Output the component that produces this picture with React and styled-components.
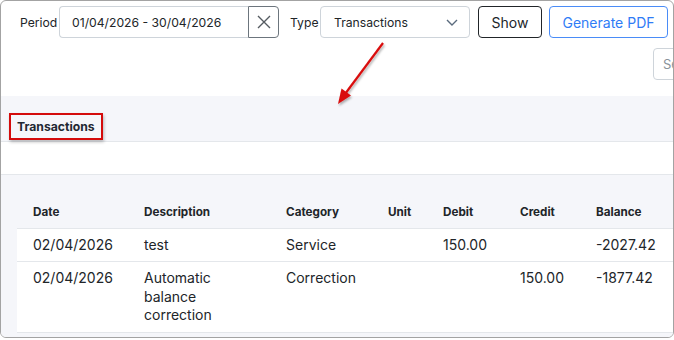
import React from 'react';
import styled, { createGlobalStyle } from 'styled-components';

const GlobalStyle = createGlobalStyle`
  html, body { margin: 0; padding: 0; background: #ffffff; }
  body { font-family: Inter, "Noto Sans", sans-serif; color: #212529; }
  * { box-sizing: border-box; }
`;

const Frame = styled.div`
  position: relative; width: 674px; height: 338px; overflow: hidden;
  border: 1px solid #a3a3a3; border-radius: 6px; background: #fff;
`;

const Toolbar = styled.div`
  display: flex; align-items: center; padding: 5px 0 0 18px; height: 37px;
  & > * { flex-shrink: 0; }
`;

const Label = styled.span`
  font-size: 12.2px; color: #212529; width: ${({ $w }) => $w}px; padding-left: 1px;
`;

const InputGroup = styled.div`
  display: flex; height: 32px; margin-right: 10px;
`;

const DateInput = styled.div`
  width: 189px; height: 32px; display: flex; align-items: center;
  padding-left: 12px; font-size: 12.2px; color: #212529;
  border: 1px solid #ced4da; border-right: none; border-radius: 4px 0 0 4px;
`;

const ClearButton = styled.div`
  width: 31px; height: 32px; display: flex; align-items: center; justify-content: center;
  border: 1px solid #6c757d; border-radius: 0 4px 4px 0;
`;

const Select = styled.div`
  width: 150px; height: 32px; display: flex; align-items: center; justify-content: space-between;
  padding: 0 11px 0 13px; font-size: 12.2px; color: #212529;
  border: 1px solid #ced4da; border-radius: 4px; margin-right: 8px;
`;

const Button = styled.div`
  height: 32px; display: flex; align-items: center; justify-content: center;
  width: ${({ $w }) => $w}px; font-size: 14px; border-radius: 4px; margin-right: 7px;
  color: ${({ $primary }) => ($primary ? '#2f7cf6' : '#212529')};
  border: 1px solid ${({ $primary }) => ($primary ? '#4a8cf7' : '#212529')};
`;

const SearchRow = styled.div`
  display: flex; justify-content: flex-end; margin-top: 10px; margin-right: -100px;
`;

const SearchInput = styled.div`
  width: 120px; height: 32px; display: flex; align-items: center; padding-left: 9px;
  font-size: 13px; color: #8a929a; border: 1px solid #ced4da; border-radius: 4px;
`;

const SectionHeader = styled.div`
  margin-top: 16px; height: 46px; background: #f5f6fa; border-bottom: 1px solid #e4e7eb;
  display: flex; align-items: flex-end; padding: 0 0 1px 8px;
`;

const Marked = styled.div`
  display: flex; align-items: center; height: 27px; padding: 0 6px;
  border: 2px solid #d40b0b; box-shadow: 1px 2px 3px rgba(0, 0, 0, 0.25);
  font-size: 12.2px; font-weight: 700; color: #1f2933;
`;

const Blank = styled.div`
  height: 33px; border-bottom: 1px solid #e4e7eb;
`;

const TableArea = styled.div`
  background: #f5f6fa; padding: 20px 0 0 16px; height: 200px;
`;

const Row = styled.div`
  display: grid; grid-template-columns: 111px 142px 102px 55px 77px 76px 1fr;
  background: ${({ $head }) => ($head ? 'transparent' : '#fff')};
  border-bottom: 1px solid #e4e7eb;
`;

const Cell = styled.div`
  padding: ${({ $head }) => ($head ? '8px 0 6px 16px' : '7px 0 7px 16px')};
  font-size: ${({ $head }) => ($head ? '11.7px' : '14px')};
  font-weight: ${({ $head }) => ($head ? 700 : 400)};
  line-height: 18.5px; color: #212529;
  padding-right: ${({ $wrap }) => ($wrap ? '16px' : '0')};
`;

const Arrow = styled.svg`
  position: absolute; left: 325px; top: 35px; overflow: visible;
`;

const heads = ['Date', 'Description', 'Category', 'Unit', 'Debit', 'Credit', 'Balance'];
const rows = [
  ['02/04/2026', 'test', 'Service', '', '150.00', '', '-2027.42'],
  ['02/04/2026', 'Automatic balance correction', 'Correction', '', '', '150.00', '-1877.42'],
];

export default function App() {
  return (
    <>
      <GlobalStyle />
      <Frame>
        <Toolbar>
          <Label $w={40}>Period</Label>
          <InputGroup>
            <DateInput>01/04/2026 - 30/04/2026</DateInput>
            <ClearButton>
              <svg width="14" height="14" viewBox="0 0 14 14">
                <path d="M1 1L13 13M13 1L1 13" stroke="#555b61" strokeWidth="1.4" />
              </svg>
            </ClearButton>
          </InputGroup>
          <Label $w={31}>Type</Label>
          <Select>
            Transactions
            <svg width="12" height="7" viewBox="0 0 12 7">
              <path d="M1 1L6 6L11 1" fill="none" stroke="#5a6b7d" strokeWidth="1.4" />
            </svg>
          </Select>
          <Button $w={64}>Show</Button>
          <Button $w={119} $primary>Generate PDF</Button>
        </Toolbar>
        <SearchRow>
          <SearchInput>Search</SearchInput>
        </SearchRow>
        <SectionHeader>
          <Marked>Transactions</Marked>
        </SectionHeader>
        <Blank />
        <TableArea>
          <Row $head>
            {heads.map((h, i) => <Cell key={i} $head>{h}</Cell>)}
          </Row>
          {rows.map((r, ri) => (
            <Row key={ri}>
              {r.map((c, ci) => <Cell key={ci} $wrap={ci === 1}>{c}</Cell>)}
            </Row>
          ))}
        </TableArea>
        <Arrow width="60" height="72" viewBox="0 0 60 72">
          <defs>
            <filter id="sh" x="-50%" y="-50%" width="200%" height="200%">
              <feDropShadow dx="1" dy="2" stdDeviation="1.2" floodColor="#000" floodOpacity="0.3" />
            </filter>
          </defs>
          <g filter="url(#sh)">
            <path d="M57 7L19 58" stroke="#d90b0b" strokeWidth="2.2" />
            <path d="M12 68L15.5 52.5L25 59.5Z" fill="#d90b0b" />
          </g>
        </Arrow>
      </Frame>
    </>
  );
}
